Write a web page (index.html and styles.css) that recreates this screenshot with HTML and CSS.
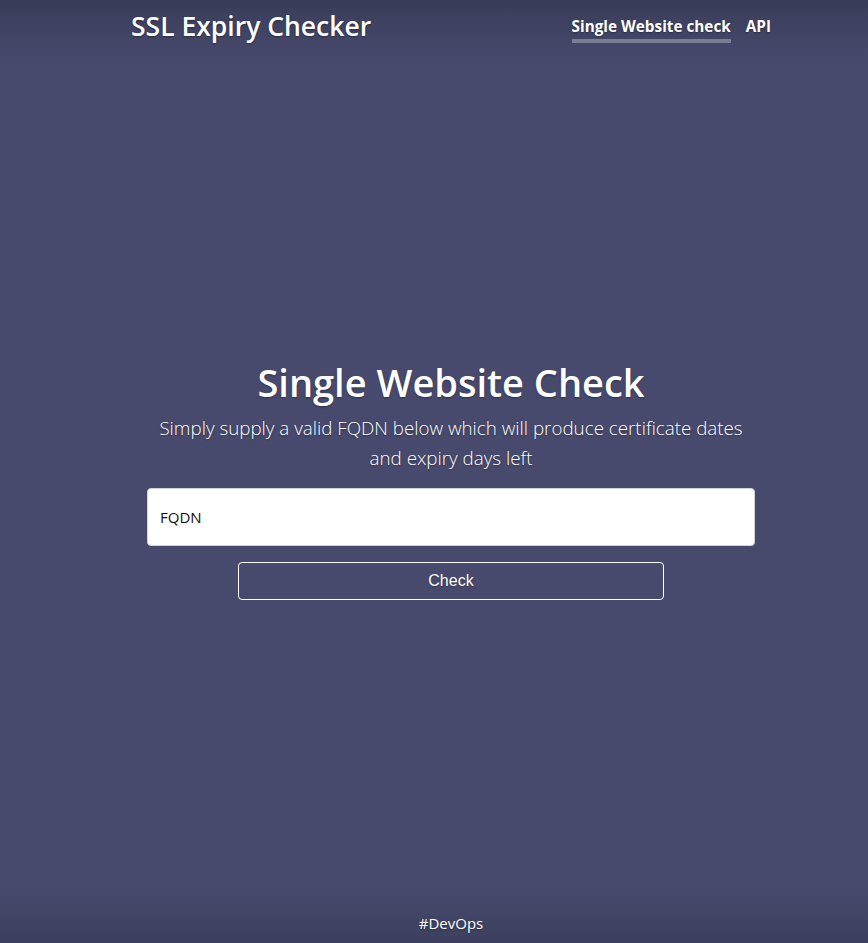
FILE: index.html
```html
<!DOCTYPE html>
<html lang="en">
<head>
<meta charset="utf-8">
<title>SSL Expiry Checker</title>
<link rel="stylesheet" href="styles.css">
</head>
<body>
<div class="page">
  <header class="masthead">
    <h3 class="brand">SSL Expiry Checker</h3>
    <nav class="nav">
      <a class="nav-link active" href="#">Single Website check</a>
      <a class="nav-link" href="#">API</a>
    </nav>
  </header>
  <main class="cover">
    <h1 class="title">Single Website Check</h1>
    <p class="lead">Simply supply a valid FQDN below which will produce certificate dates and expiry days left</p>
    <form class="check-form">
      <input class="fqdn" type="text" value="FQDN">
      <button class="btn" type="button">Check</button>
    </form>
  </main>
  <footer class="footer">#DevOps</footer>
</div>
</body>
</html>
```
FILE: styles.css
```css
html, body {
  margin: 0;
  padding: 0;
  height: 100%;
}
body {
  background: linear-gradient(to bottom, #393c58 0px, #474a6d 60px, #474a6d calc(100% - 55px), #3c3f5d 100%);
  color: #fff;
  font-family: "Open Sans", "Noto Sans", sans-serif;
  text-shadow: 0 1px 2px rgba(0,0,0,.35);
}
.page {
  box-sizing: border-box;
  min-height: 100vh;
  padding-left: 34px;
  display: flex;
  flex-direction: column;
}
.masthead {
  width: 640px;
  margin: 0 auto;
  display: flex;
  justify-content: space-between;
  align-items: flex-start;
  padding-top: 8px;
}
.brand {
  margin: 0;
  font-size: 26.5px;
  font-weight: 600;
  line-height: 36px;
}
.nav {
  display: flex;
  gap: 15px;
  padding-top: 4px;
}
.nav-link {
  color: #fff;
  text-decoration: none;
  font-weight: 700;
  font-size: 15.3px;
  line-height: 22px;
  padding: 3px 0 2px;
  border-bottom: 4px solid transparent;
}
.nav-link.active {
  border-bottom-color: #7b7d97;
}
.cover {
  flex: 1;
  width: 640px;
  margin: 0 auto;
  display: flex;
  flex-direction: column;
  align-items: center;
  justify-content: center;
  text-align: center;
  padding-top: 3px;
}
.title {
  margin: 0 0 8px;
  font-size: 38px;
  font-weight: 600;
  line-height: 46px;
}
.lead {
  margin: 0 0 15px;
  font-size: 18.8px;
  font-weight: 300;
  line-height: 30px;
  width: 600px;
}
.check-form {
  display: flex;
  flex-direction: column;
  align-items: center;
  gap: 16px;
  width: 100%;
}
.fqdn {
  box-sizing: border-box;
  width: 608px;
  height: 58px;
  border: 1px solid #ced4da;
  border-radius: 4px;
  padding: 0 12px;
  font-family: "Open Sans", sans-serif;
  font-size: 15px;
  color: #111;
  background: #fff;
}
.btn {
  box-sizing: border-box;
  width: 426px;
  height: 38px;
  border: 1px solid #fff;
  border-radius: 4px;
  background: transparent;
  color: #fff;
  font-family: "Liberation Sans", Arial, sans-serif;
  font-size: 16px;
  text-shadow: 0 1px 2px rgba(0,0,0,.35);
}
.footer {
  text-align: center;
  font-size: 15px;
  line-height: 22px;
  padding: 0 0 9px;
}
```
